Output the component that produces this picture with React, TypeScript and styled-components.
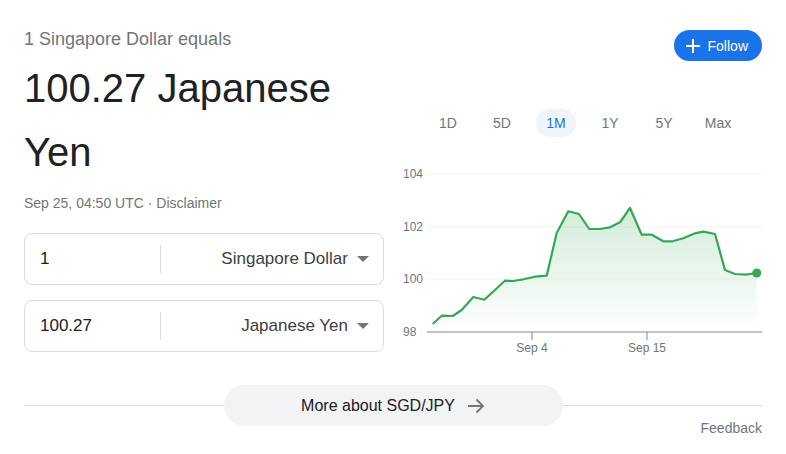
import styled, { createGlobalStyle } from "styled-components";

const GlobalStyle = createGlobalStyle`
  html, body {
    margin: 0;
    padding: 0;
    background: #fff;
    font-family: "Liberation Sans", Arial, sans-serif;
  }
`;

const periods = ["1D", "5D", "1M", "1Y", "5Y", "Max"];

// chart points, in svg coords (svg sits at the top left of the chart area)
const points: [number, number][] = [
  [32.7, 160], [41.7, 151.7], [52.7, 152], [61.7, 146], [73.3, 133],
  [84.3, 135.7], [105, 116.7], [113.3, 117], [123.3, 115.3], [135, 112.7],
  [146.7, 111.7], [156.7, 69], [168.3, 47.3], [179, 50], [189.3, 65],
  [200, 65], [210, 63.3], [220, 58.3], [230, 44], [241.7, 70.7],
  [251.7, 70.7], [263.3, 77.3], [272.7, 77.3], [283.3, 74.3], [295, 69.3],
  [303.3, 67.7], [315, 70], [325, 106], [335, 110], [346, 110.7],
  [356.7, 109],
];

const grid = [
  { label: "104", y: 10 },
  { label: "102", y: 63 },
  { label: "100", y: 115 },
];

const BASE = 168;

function Caret() {
  return (
    <svg width="12" height="6" viewBox="0 0 12 6">
      <path d="M0 0 L12 0 L6 6 Z" fill="#70757a" />
    </svg>
  );
}

function Chart() {
  const line = points.map(([x, y], i) => `${i ? "L" : "M"}${x} ${y}`).join(" ");
  const first = points[0];
  const last = points[points.length - 1];
  const area = `${line} L${last[0]} ${BASE} L${first[0]} ${BASE} Z`;

  return (
    <ChartSvg width="362" height="195" viewBox="0 0 362 195">
      <defs>
        <linearGradient id="fill" x1="0" y1="0" x2="0" y2="1">
          <stop offset="0%" stopColor="#34a853" stopOpacity="0.22" />
          <stop offset="100%" stopColor="#34a853" stopOpacity="0" />
        </linearGradient>
      </defs>
      {grid.map((g) => (
        <g key={g.label}>
          <line x1="27" x2="362" y1={g.y} y2={g.y} stroke="#f1f3f4" strokeWidth="1" />
          <text x="3" y={g.y + 4} fontSize="12" fill="#70757a">
            {g.label}
          </text>
        </g>
      ))}
      <text x="3" y={BASE + 4} fontSize="12" fill="#70757a">
        98
      </text>
      <path d={area} fill="url(#fill)" />
      <path d={line} fill="none" stroke="#34a853" strokeWidth="2.2" strokeLinejoin="round" />
      <circle cx={last[0]} cy={last[1]} r="4.5" fill="#34a853" />
      <line x1="27" x2="362" y1={BASE} y2={BASE} stroke="#80868b" strokeWidth="1" />
      <line x1="132" x2="132" y1={BASE} y2={BASE + 8} stroke="#80868b" strokeWidth="1" />
      <line x1="247" x2="247" y1={BASE} y2={BASE + 8} stroke="#80868b" strokeWidth="1" />
      <text x="132" y={BASE + 20} fontSize="12" fill="#70757a" textAnchor="middle">
        Sep 4
      </text>
      <text x="247" y={BASE + 20} fontSize="12" fill="#70757a" textAnchor="middle">
        Sep 15
      </text>
    </ChartSvg>
  );
}

export default function App() {
  return (
    <>
      <GlobalStyle />
      <Page>
        <Top>
          <Left>
            <Subtitle>1 Singapore Dollar equals</Subtitle>
            <Result>100.27 Japanese Yen</Result>
            <Meta>
              Sep 25, 04:50 UTC · <span>Disclaimer</span>
            </Meta>
            <Boxes>
              <Box>
                <Amount>1</Amount>
                <Currency>
                  Singapore Dollar
                  <Caret />
                </Currency>
              </Box>
              <Box>
                <Amount>100.27</Amount>
                <Currency>
                  Japanese Yen
                  <Caret />
                </Currency>
              </Box>
            </Boxes>
          </Left>
          <Right>
            <FollowRow>
              <FollowButton>
                <svg width="14" height="14" viewBox="0 0 14 14">
                  <path d="M7 0 V14 M0 7 H14" stroke="#fff" strokeWidth="2" />
                </svg>
                Follow
              </FollowButton>
            </FollowRow>
            <Tabs>
              {periods.map((p) => (
                <Tab key={p} active={p === "1M"}>
                  {p}
                </Tab>
              ))}
            </Tabs>
            <Chart />
          </Right>
        </Top>
        <Footer>
          <Rule />
          <MoreButton>
            More about SGD/JPY
            <svg width="18" height="16" viewBox="0 0 18 16">
              <path
                d="M1 8 H16 M9.5 1.5 L16 8 L9.5 14.5"
                fill="none"
                stroke="#70757a"
                strokeWidth="1.8"
              />
            </svg>
          </MoreButton>
          <Rule />
        </Footer>
        <Feedback>Feedback</Feedback>
      </Page>
    </>
  );
}

const Page = styled.div`
  width: 786px;
  box-sizing: border-box;
  padding: 28px 24px 0;
`;

const Top = styled.div`
  display: grid;
  grid-template-columns: 360px 1fr;
  column-gap: 16px;
`;

const Left = styled.div`
  display: flex;
  flex-direction: column;
`;

const Subtitle = styled.div`
  font-size: 18px;
  line-height: 22px;
  color: #70757a;
`;

const Result = styled.div`
  margin-top: 6px;
  font-size: 40px;
  line-height: 64px;
  color: #202124;
  width: 330px;
`;

const Meta = styled.div`
  margin-top: 9px;
  font-size: 14px;
  line-height: 20px;
  color: #70757a;
`;

const Boxes = styled.div`
  margin-top: 20px;
  display: flex;
  flex-direction: column;
  gap: 15px;
`;

const Box = styled.div`
  height: 52px;
  box-sizing: border-box;
  border: 1px solid #dadce0;
  border-radius: 8px;
  display: flex;
  align-items: center;
`;

const Amount = styled.div`
  width: 136px;
  box-sizing: border-box;
  padding-left: 15px;
  height: 28px;
  line-height: 28px;
  font-size: 17px;
  color: #202124;
  border-right: 1px solid #dadce0;
`;

const Currency = styled.div`
  flex: 1;
  display: flex;
  justify-content: flex-end;
  align-items: center;
  gap: 9px;
  padding-right: 14px;
  font-size: 17px;
  color: #3c4043;
`;

const Right = styled.div`
  display: flex;
  flex-direction: column;
`;

const FollowRow = styled.div`
  display: flex;
  justify-content: flex-end;
  margin-top: 2px;
`;

const FollowButton = styled.button`
  height: 31px;
  padding: 0 14px 0 12px;
  border: none;
  border-radius: 16px;
  background: #1a73e8;
  color: #fff;
  font-family: inherit;
  font-size: 14px;
  display: flex;
  align-items: center;
  gap: 8px;
`;

const Tabs = styled.div`
  margin-top: 48px;
  padding-left: 28px;
  display: flex;
  gap: 14px;
`;

const Tab = styled.div<{ active?: boolean }>`
  width: 40px;
  height: 28px;
  line-height: 28px;
  text-align: center;
  border-radius: 14px;
  font-size: 14px;
  color: ${({ active }) => (active ? "#1a73e8" : "#70757a")};
  background: ${({ active }) => (active ? "#f1f5fb" : "transparent")};
`;

const ChartSvg = styled.svg`
  display: block;
  margin-top: 27px;
  font-family: "Liberation Sans", Arial, sans-serif;
`;

const Footer = styled.div`
  margin-top: 26px;
  display: flex;
  align-items: center;
`;

const Rule = styled.div`
  flex: 1;
  height: 1px;
  background: #dadce0;
`;

const MoreButton = styled.div`
  width: 339px;
  height: 41px;
  border-radius: 21px;
  background: #f1f3f4;
  display: flex;
  justify-content: center;
  align-items: center;
  gap: 12px;
  font-size: 16px;
  color: #202124;
`;

const Feedback = styled.div`
  margin-top: -6px;
  text-align: right;
  font-size: 14px;
  line-height: 16px;
  color: #70757a;
`;
